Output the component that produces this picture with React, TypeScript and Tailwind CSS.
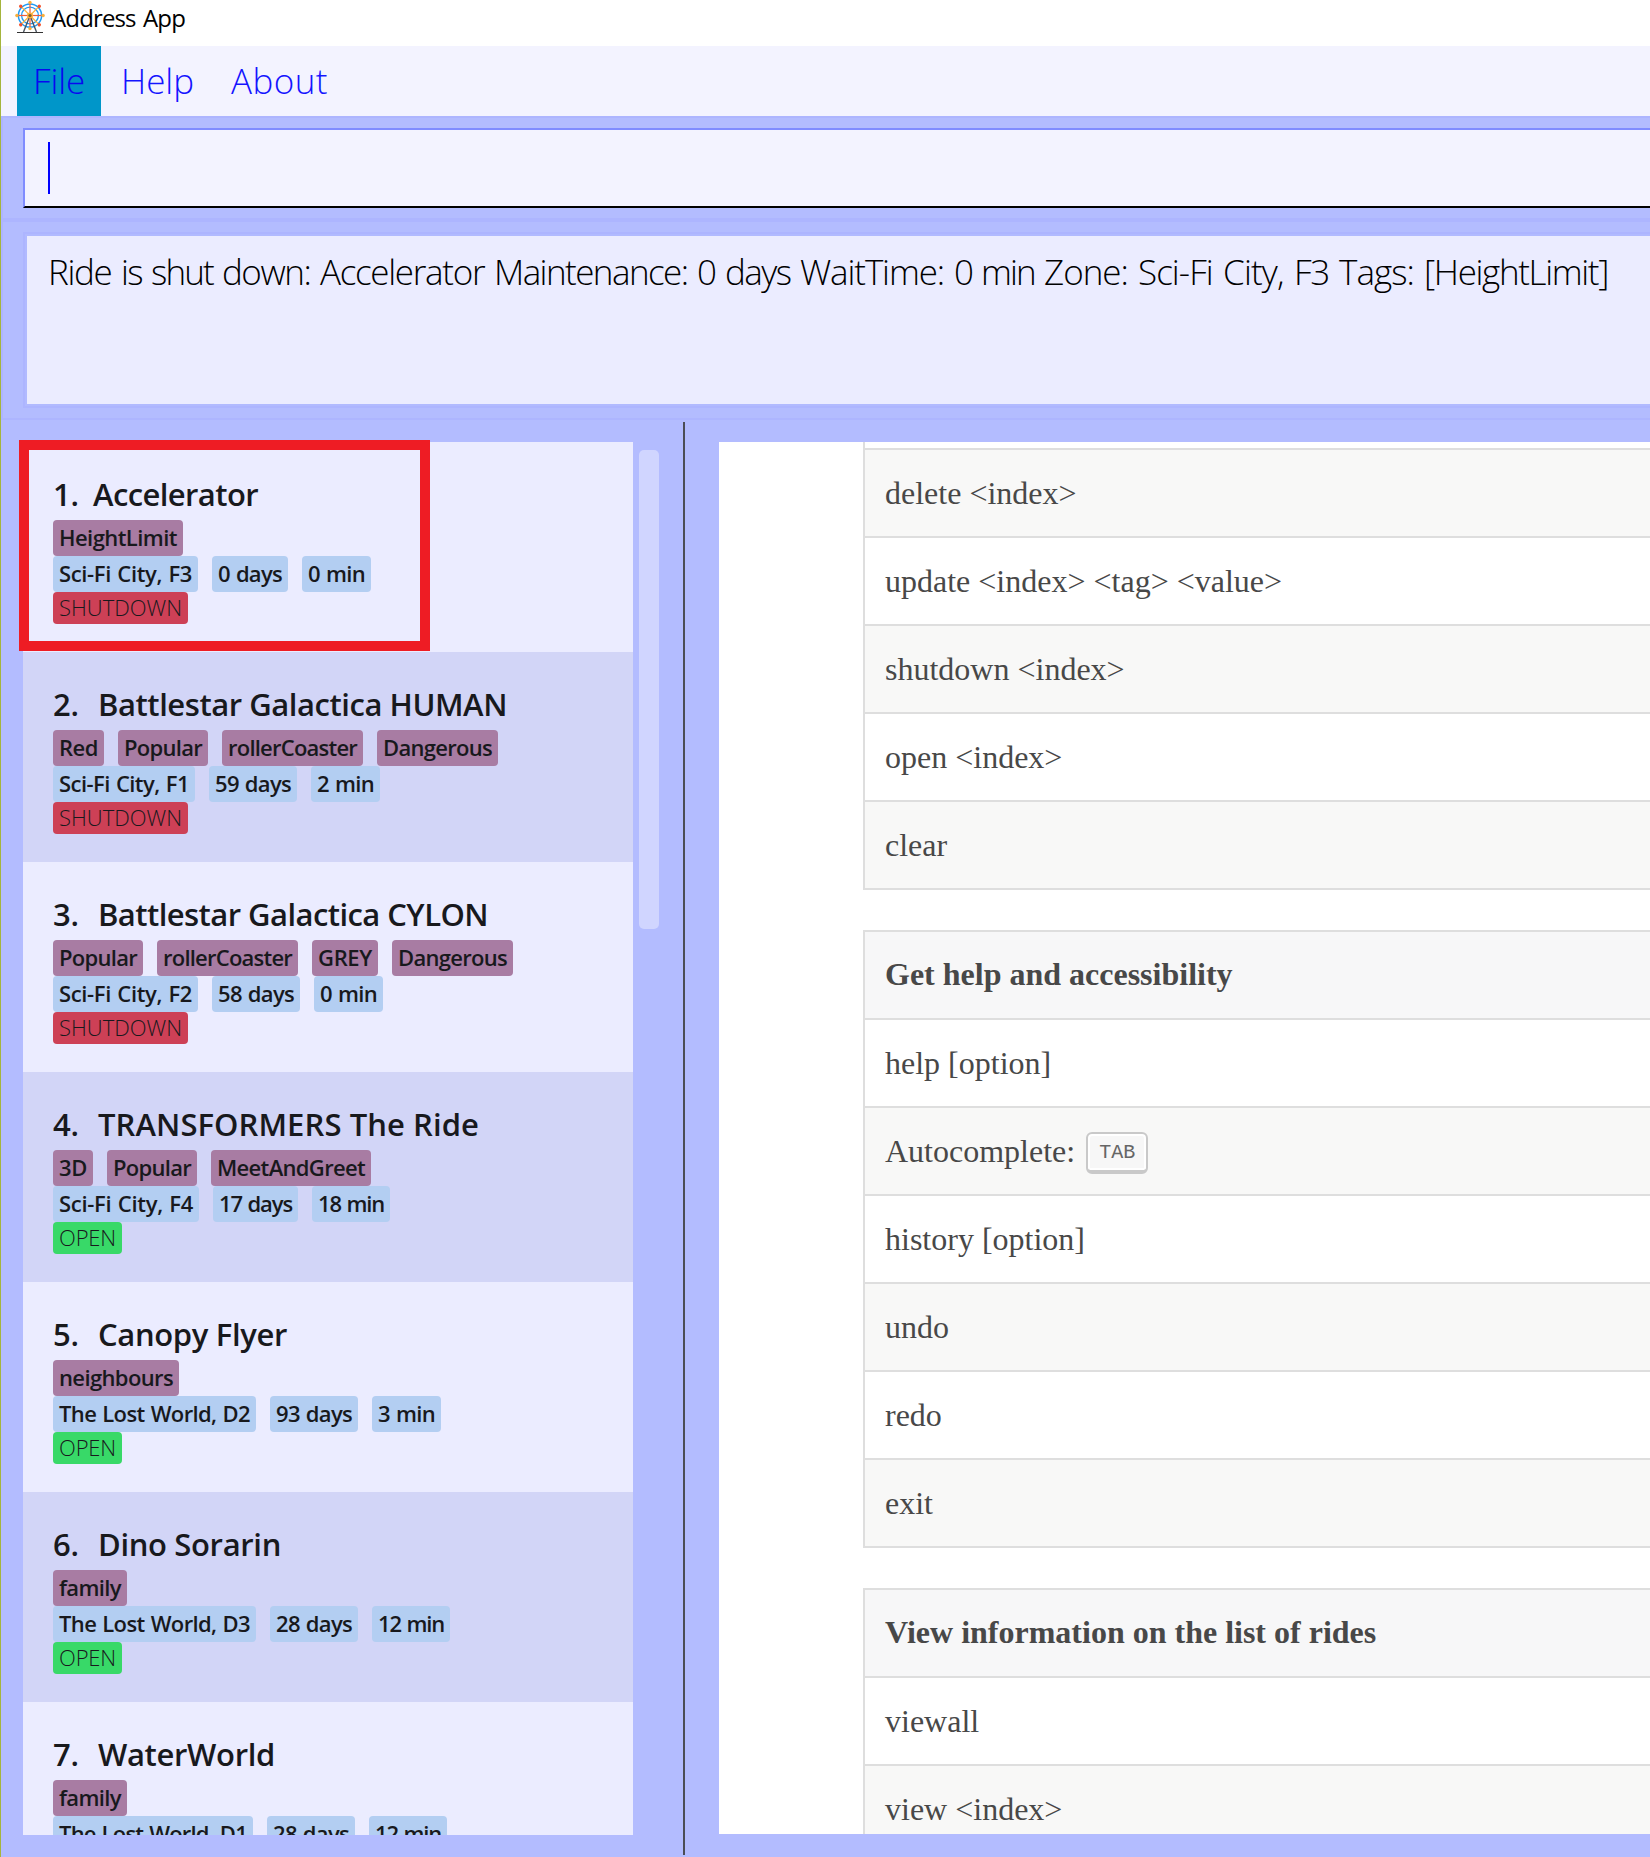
import { useLayoutEffect, useRef } from 'react';

/** Text whose letter spacing is tuned so that it fills exactly `w` pixels. */
function Fit({ w, children, className = '' }: { w: number; children: string; className?: string }) {
  const ref = useRef<HTMLSpanElement>(null);
  useLayoutEffect(() => {
    const el = ref.current;
    if (!el) return;
    el.style.letterSpacing = '0px';
    const natural = el.getBoundingClientRect().width;
    el.style.letterSpacing = `${(w - natural) / children.length}px`;
  }, [w, children]);
  return (
    <span ref={ref} className={`inline-block whitespace-pre ${className}`}>
      {children}
    </span>
  );
}

type Chip = [label: string, width: number];
type Ride = { no: string; name: string; nameW: number; tags: Chip[]; info: Chip[]; open: boolean };

const rides: Ride[] = [
  { no: '1.', name: 'Accelerator', nameW: 165, tags: [['HeightLimit', 130]], info: [['Sci-Fi City, F3', 145], ['0 days', 76], ['0 min', 69]], open: false },
  { no: '2.', name: 'Battlestar Galactica HUMAN', nameW: 409, tags: [['Red', 51], ['Popular', 90], ['rollerCoaster', 141], ['Dangerous', 121]], info: [['Sci-Fi City, F1', 142], ['59 days', 88], ['2 min', 69]], open: false },
  { no: '3.', name: 'Battlestar Galactica CYLON', nameW: 390, tags: [['Popular', 90], ['rollerCoaster', 141], ['GREY', 66], ['Dangerous', 121]], info: [['Sci-Fi City, F2', 145], ['58 days', 88], ['0 min', 69]], open: false },
  { no: '4.', name: 'TRANSFORMERS The Ride', nameW: 381, tags: [['3D', 40], ['Popular', 90], ['MeetAndGreet', 160]], info: [['Sci-Fi City, F4', 146], ['17 days', 85], ['18 min', 78]], open: true },
  { no: '5.', name: 'Canopy Flyer', nameW: 189, tags: [['neighbours', 126]], info: [['The Lost World, D2', 203], ['93 days', 88], ['3 min', 69]], open: true },
  { no: '6.', name: 'Dino Sorarin', nameW: 183, tags: [['family', 74]], info: [['The Lost World, D3', 203], ['28 days', 88], ['12 min', 78]], open: true },
  { no: '7.', name: 'WaterWorld', nameW: 177, tags: [['family', 74]], info: [['The Lost World, D1', 200], ['28 days', 88], ['12 min', 78]], open: true },
];

/** The result message, word by word, each with its advance including the trailing space. */
const message: Chip[] = [
  ['Ride ', 73],
  ['is ', 30],
  ['shut ', 71],
  ['down: ', 98],
  ['Accelerator ', 174],
  ['Maintenance: ', 203],
  ['0 ', 28],
  ['days ', 75],
  ['WaitTime: ', 154],
  ['0 ', 27],
  ['min ', 63],
  ['Zone: ', 94],
  ['Sci-Fi ', 85],
  ['City, ', 71],
  ['F3 ', 45],
  ['Tags: ', 85],
  ['[HeightLimit]', 184],
];

function Chips({ items, tone }: { items: Chip[]; tone: string }) {
  return (
    <div className="flex h-9 gap-[14px]">
      {items.map(([label, width]) => (
        <div key={label} className={`h-9 rounded-[4px] px-[6px] text-[22px] leading-[34px] font-semibold [word-spacing:1px] ${tone}`}>
          <Fit w={width - 12}>{label}</Fit>
        </div>
      ))}
    </div>
  );
}

function RideCard({ ride, index }: { ride: Ride; index: number }) {
  return (
    <div className={`h-[210px] shrink-0 pl-[30px] pt-[30px] text-[#18191d] ${index % 2 ? 'bg-[#d2d5f7]' : 'bg-[#ebecff]'}`}>
      <div className="flex h-12 text-[31px] leading-[44px] font-semibold">
        <div className={index === 0 ? 'w-[40px]' : 'w-[45px]'}>
          <Fit w={26}>{ride.no}</Fit>
        </div>
        <Fit w={ride.nameW}>{ride.name}</Fit>
      </div>
      <Chips items={ride.tags} tone="bg-[#a87ca3]" />
      <Chips items={ride.info} tone="bg-[#b3cef2]" />
      <div className={`h-8 w-fit rounded-[4px] px-[6px] text-[22px] leading-[30px] font-light ${ride.open ? 'bg-[#38d968]' : 'bg-[#cd4056]'}`}>
        <Fit w={ride.open ? 57 : 123}>{ride.open ? 'OPEN' : 'SHUTDOWN'}</Fit>
      </div>
    </div>
  );
}

function Cell({ children, tone = 'bg-white' }: { children: React.ReactNode; tone?: string }) {
  return <div className={`flex h-[88px] items-center border-b-2 border-[#dedede] pl-5 ${tone}`}>{children}</div>;
}

function CommandTable({ title, rows }: { title?: string; rows: React.ReactNode[] }) {
  // Body rows are striped; a table without a heading starts on the shaded stripe.
  const offset = title ? 0 : 1;
  return (
    <div className="ml-[144px] border-l-2 border-t-2 border-[#dedede]">
      {title && (
        <Cell tone="bg-[#f7f7f8]">
          <b className="pb-[2px]">{title}</b>
        </Cell>
      )}
      {rows.map((row, i) => (
        <Cell key={i} tone={(i + offset) % 2 ? 'bg-[#f8f8f7]' : 'bg-white'}>
          {row}
        </Cell>
      ))}
    </div>
  );
}

function FerrisWheel() {
  const spokes = [0, 45, 90, 135, 180, 225, 270, 315];
  return (
    <svg className="ml-[14px] h-[34px] w-[30px] shrink-0" viewBox="0 0 30 34">
      <g fill="none" stroke="#1e9bf5">
        <circle cx="15" cy="15.500" r="11.600" strokeWidth="1.500" />
        <circle cx="15" cy="15.500" r="8.400" strokeWidth="1.300" />
      </g>
      {spokes.map((a, i) => (
        <g key={a} transform={`rotate(${a} 15 15.500)`}>
          <path d="M15 15.500V4" stroke={i % 2 ? '#fbb03b' : '#f15a3a'} strokeWidth="1.200" />
          <circle cx="15" cy="2.400" r="1.700" fill={i % 2 ? '#f4512c' : '#fbb03b'} />
        </g>
      ))}
      <path d="M15 15.500 8.500 32M15 15.500 21.500 32" stroke="#4d5560" strokeWidth="1.400" />
      <path d="M2 32.500H28" stroke="#333" strokeWidth="1" />
      <circle cx="15" cy="15.500" r="3" fill="#fbb03b" />
      <circle cx="15" cy="15.500" r="1.600" fill="#7a6030" />
    </svg>
  );
}

export default function App() {
  return (
    <div className="flex h-[1857px] w-[1650px] flex-col overflow-hidden border-l border-[#a5b53c] bg-[#b3bcff] font-['Open_Sans','Noto_Sans',sans-serif]">
      <header className="flex h-[46px] shrink-0 bg-white text-[24px] leading-[36px] text-black [word-spacing:2px]">
        <FerrisWheel />
        <div className="ml-[6px]">
          <Fit w={134}>Address App</Fit>
        </div>
      </header>

      <nav className="flex h-[70px] shrink-0 bg-[#f3f3ff] pl-4 text-[35px] leading-[70px] font-light text-[#1414ff]">
        <div className="w-[84px] bg-[#0096c9] pl-4 text-[#0808f0]">
          <Fit w={52}>File</Fit>
        </div>
        <div className="ml-5 w-[110px]">
          <Fit w={73}>Help</Fit>
        </div>
        <Fit w={97}>About</Fit>
      </nav>

      <section className="h-[104px] shrink-0 border-2 border-r-0 border-[#adb5ff] pl-5 pt-[10px]">
        <div className="h-20 border-t-2 border-b-2 border-l-2 border-[#808cff] border-b-black bg-[#f3f3ff] pl-[23px] pt-3">
          <div className="h-[52px] w-[2px] bg-[#0000ff]" />
        </div>
      </section>

      <section className="h-[200px] shrink-0 border-2 border-r-0 border-[#adb5ff] pl-5 pt-[10px]">
        <div className="h-[176px] border-2 border-r-0 border-[#adb5ff]">
          <div className="flex h-[172px] border-2 border-r-0 border-[#b1baff] bg-[#ebecff] pl-[21px] pt-[12px] text-[35px] leading-[48px] font-light text-black [word-spacing:2px]">
            {message.map(([word, advance], i) => (
              <Fit key={i} w={advance}>
                {word}
              </Fit>
            ))}
          </div>
        </div>
      </section>

      <main className="flex min-h-0 grow">
        <div className="relative ml-[22px] mt-[22px] h-[1393px] w-[610px]">
          <div className="flex h-full flex-col overflow-hidden">
            {rides.map((ride, i) => (
              <RideCard key={ride.no} ride={ride} index={i} />
            ))}
          </div>
          <div className="absolute -left-1 -top-[2px] h-[211px] w-[411px] border-[10px] border-[#ee1c24]" />
        </div>
        <div className="ml-[6px] mt-[30px] h-[479px] w-5 rounded-[5px] bg-[#d0d5ff]" />
        <div className="ml-6 mt-[2px] h-[1433px] w-[2px] bg-[#4b4d55]" />
        <div className="ml-[34px] mt-[22px] h-[1392px] grow overflow-hidden bg-white font-['Liberation_Serif',serif] text-[32px] text-[#484848]">
          <div className="ml-[144px] h-[6px] border-l-2 border-[#dedede]" />
          <div className="flex flex-col gap-10">
            <CommandTable rows={['delete <index>', 'update <index> <tag> <value>', 'shutdown <index>', 'open <index>', 'clear']} />
            <CommandTable
              title="Get help and accessibility"
              rows={[
                'help [option]',
                <>
                  Autocomplete:
                  <kbd className="relative top-[2px] ml-[11px] h-[42px] w-[62px] rounded-[6px] border-2 border-b-4 border-[#c9c9c9] bg-[#f7f7f7] pl-[11px] pt-[2px] font-['Liberation_Mono',monospace] text-[20px] leading-[34px] text-[#666] shadow-[inset_0_0_0_2px_#fff]">
                    TAB
                  </kbd>
                </>,
                'history [option]',
                'undo',
                'redo',
                'exit',
              ]}
            />
            <CommandTable title="View information on the list of rides" rows={['viewall', 'view <index>']} />
          </div>
        </div>
      </main>
    </div>
  );
}
